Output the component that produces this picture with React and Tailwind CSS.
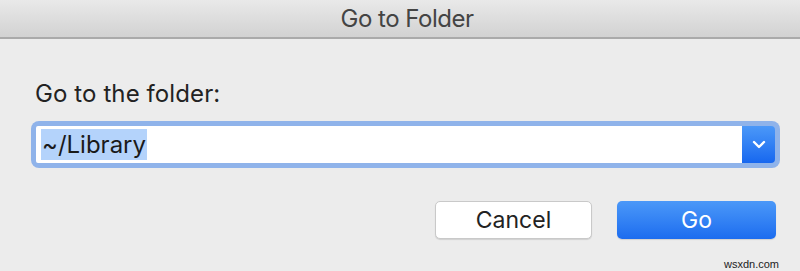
export default function App() {
  return (
    <div className="w-[800px] h-[271px] bg-[#ececec] flex flex-col overflow-hidden" style={{ fontFamily: "Inter, 'Liberation Sans', sans-serif" }}>
      <div className="h-[39px] shrink-0 bg-gradient-to-b from-[#e9e9e9] to-[#d2d2d2] border-b-2 border-[#aaaaaa] flex items-center justify-center pl-[14px]">
        <span className="text-[24px] text-[#444444] leading-none tracking-[-0.5px]">Go to Folder</span>
      </div>
      <div className="flex flex-col pl-[31px] pr-[20px] pt-[43px]">
        <div className="pl-[4px] text-[24px] leading-none text-[#222222] tracking-[0.1px]">Go to the folder:</div>
        <div className="mt-[15px] w-[749px] h-[47px] rounded-[8px] bg-[#8fb3ea] p-[5px] flex">
          <div className="flex-1 bg-white rounded-l-[2px] flex items-center pl-[5px]">
            <span className="bg-[#b4d3fb] text-[24px] text-[#1a1a1a] leading-[31px] px-[1px]">~/Library</span>
          </div>
          <div className="w-[33px] rounded-r-[4px] bg-gradient-to-b from-[#4b98f8] to-[#1767ef] flex items-center justify-center">
            <svg width="14" height="9" viewBox="0 0 14 9" fill="none">
              <path d="M2 2l5 5 5-5" stroke="white" strokeWidth="2.4" strokeLinecap="round" strokeLinejoin="round" />
            </svg>
          </div>
        </div>
        <div className="mt-[33px] flex justify-end gap-[25px] pr-[4px]">
          <div className="w-[157px] h-[38px] bg-white rounded-[5px] border border-[#c9c9c9] shadow-[0_1px_1px_rgba(0,0,0,0.12)] flex items-center justify-center text-[23px] text-[#222222]">Cancel</div>
          <div className="w-[159px] h-[38px] rounded-[5px] bg-gradient-to-b from-[#4b98f8] to-[#1c6cef] shadow-[0_1px_1px_rgba(0,0,0,0.12)] flex items-center justify-center text-[23px] text-white">Go</div>
        </div>
        <div className="mt-[20px] flex justify-end pr-[1px]">
          <span className="text-[11px] leading-none text-[#222222]" style={{ fontFamily: "'Liberation Sans', sans-serif" }}>wsxdn.com</span>
        </div>
      </div>
    </div>
  );
}
